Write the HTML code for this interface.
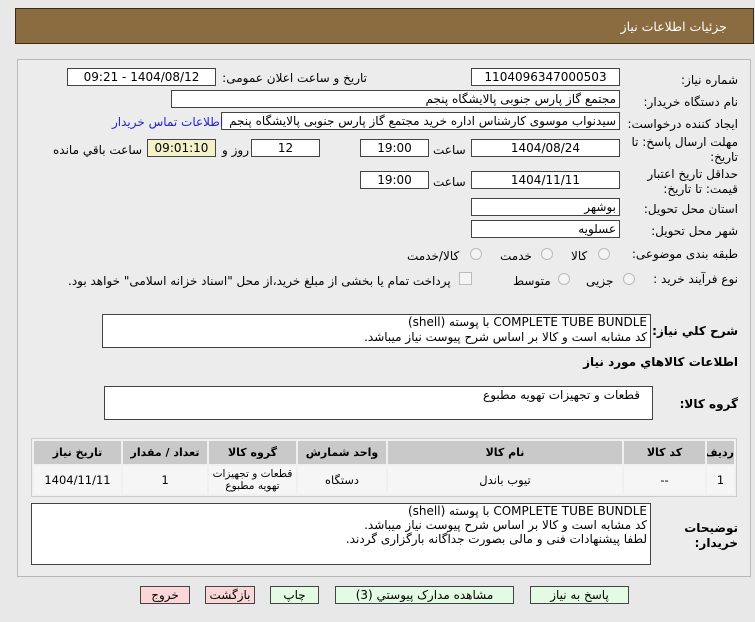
<!DOCTYPE html>
<html><head><meta charset="utf-8">
<style>
*{margin:0;padding:0;box-sizing:border-box}
body{width:755px;height:622px;background:#e8e8e8;font-family:"DejaVu Sans","Liberation Sans",sans-serif;font-size:11.5px;color:#000;position:relative;overflow:hidden;direction:rtl}
.a{position:absolute;white-space:nowrap}
.hdr{left:15px;top:8px;width:739px;height:36px;background:#8b6b40;border:1px solid #3a2b17}
.hdr span{position:absolute;right:26px;top:10px;color:#fff;font-size:12.5px}
.panel{left:17px;top:59px;width:734px;height:518px;border:1px solid #b8b8b8;background:#ececec}
.box{position:absolute;background:#fff;border:1px solid #444;height:18px;line-height:16px;padding:0 3px;white-space:nowrap;overflow:hidden;font-size:12px}
.c{text-align:center}
.lbl{position:absolute;white-space:nowrap;font-size:12px}
.rad{position:absolute;width:12px;height:12px;border-radius:50%;border:1px solid #bbb;background:#f4f4f4}
table{position:absolute;left:31px;top:438px;width:706px;table-layout:fixed;border-collapse:separate;border-spacing:2px;border:1px solid #ccc;background:#f0f0f0;font-size:11.5px}
th{background:#c9c9c9;height:23px;font-weight:bold;font-size:11px;white-space:nowrap;overflow:hidden}
td{background:#f6f6f6;height:28px;text-align:center;line-height:13px;white-space:nowrap}
.btn{position:absolute;top:586px;height:18px;border:1px solid #444;text-align:center;line-height:16px;font-size:12px}
.g{background:#e3fbe3}.p{background:#fbd6d6}
</style></head><body>
<div class="a hdr"><span>جزئیات اطلاعات نیاز</span></div>
<div class="a panel"></div>

<div class="lbl" style="right:17px;top:73px">شماره نیاز:</div>
<div class="box c" style="left:471px;top:68px;width:149px">1104096347000503</div>
<div class="lbl" style="right:388px;top:71px">تاریخ و ساعت اعلان عمومی:</div>
<div class="box c" style="left:67px;top:68px;width:149px">1404/08/12 - 09:21</div>

<div class="lbl" style="right:17px;top:95px">نام دستگاه خریدار:</div>
<div class="box" style="left:171px;top:90px;width:449px">مجتمع گاز پارس جنوبی  پالایشگاه پنجم</div>

<div class="lbl" style="right:17px;top:117px">ایجاد کننده درخواست:</div>
<div class="box" style="left:221px;top:112px;width:399px">سیدنواب موسوی کارشناس اداره خرید مجتمع گاز پارس جنوبی  پالایشگاه پنجم</div>
<div class="lbl" style="left:112px;top:115px;color:#2323d0">اطلاعات تماس خریدار</div>

<div class="lbl" style="right:17px;top:135px;line-height:15px;text-align:right">مهلت ارسال پاسخ: تا<br>تاریخ:</div>
<div class="box c" style="left:471px;top:139px;width:149px">1404/08/24</div>
<div class="lbl" style="left:433px;top:143px">ساعت</div>
<div class="box c" style="left:360px;top:139px;width:69px">19:00</div>
<div class="box c" style="left:251px;top:139px;width:69px">12</div>
<div class="lbl" style="left:222px;top:143px">روز و</div>
<div class="box c" style="left:147px;top:139px;width:69px;background:#f3f1c8">09:01:10</div>
<div class="lbl" style="left:53px;top:143px">ساعت باقي مانده</div>

<div class="lbl" style="right:17px;top:167px;line-height:15px;text-align:right">حداقل تاریخ اعتبار<br>قیمت: تا تاریخ:</div>
<div class="box c" style="left:471px;top:171px;width:149px">1404/11/11</div>
<div class="lbl" style="left:433px;top:175px">ساعت</div>
<div class="box c" style="left:360px;top:171px;width:69px">19:00</div>

<div class="lbl" style="right:17px;top:202px">استان محل تحویل:</div>
<div class="box" style="left:471px;top:198px;width:149px">بوشهر</div>
<div class="lbl" style="right:17px;top:224px">شهر محل تحویل:</div>
<div class="box" style="left:471px;top:220px;width:149px">عسلویه</div>

<div class="lbl" style="right:17px;top:247px">طبقه بندی موضوعی:</div>
<div class="rad" style="left:598px;top:248px"></div><div class="lbl" style="left:571px;top:249px">کالا</div>
<div class="rad" style="left:541px;top:248px"></div><div class="lbl" style="left:500px;top:249px">خدمت</div>
<div class="rad" style="left:470px;top:248px"></div><div class="lbl" style="left:407px;top:249px">کالا/خدمت</div>

<div class="lbl" style="right:17px;top:272px">نوع فرآیند خرید :</div>
<div class="rad" style="left:623px;top:273px"></div><div class="lbl" style="left:586px;top:274px">جزیی</div>
<div class="rad" style="left:558px;top:273px"></div><div class="lbl" style="left:513px;top:274px">متوسط</div>
<div class="a" style="left:459px;top:272px;width:13px;height:13px;border:1px solid #bbb;background:#f4f4f4"></div>
<div class="lbl" style="left:68px;top:274px">پرداخت تمام یا بخشی از مبلغ خرید،از محل "اسناد خزانه اسلامی" خواهد بود.</div>

<div class="lbl" style="right:17px;top:324px;font-weight:bold">شرح کلي نياز:</div>
<div class="box" style="left:102px;top:314px;width:549px;height:34px;line-height:15px;white-space:normal;text-align:right">COMPLETE TUBE BUNDLE با پوسته (shell)<br>کد مشابه است و کالا بر اساس شرح پیوست نیاز میباشد.</div>
<div class="lbl" style="right:17px;top:355px;font-weight:bold">اطلاعات كالاهاي مورد نياز</div>
<div class="lbl" style="right:17px;top:397px;font-weight:bold">گروه کالا:</div>
<div class="box" style="left:104px;top:386px;width:549px;height:34px;padding-right:12px">قطعات و تجهیزات تهویه مطبوع</div>

<table>
<colgroup><col style="width:27px"><col style="width:81px"><col style="width:234px"><col style="width:88px"><col style="width:87px"><col style="width:84px"><col></colgroup>
<tr><th>ردیف</th><th>کد کالا</th><th>نام کالا</th><th>واحد شمارش</th><th>گروه کالا</th><th>تعداد / مقدار</th><th>تاریخ نیاز</th></tr>
<tr><td>1</td><td>--</td><td>تیوب باندل</td><td>دستگاه</td><td style="font-size:10.5px;line-height:12px">قطعات و تجهیزات<br>تهویه مطبوع</td><td>1</td><td>1404/11/11</td></tr>
</table>

<div class="lbl" style="right:17px;top:521px;font-weight:bold;line-height:15px;text-align:right">توضیحات<br>خریدار:</div>
<div class="box" style="left:31px;top:503px;width:620px;height:62px;line-height:14px;white-space:normal;text-align:right">COMPLETE TUBE BUNDLE با پوسته (shell)<br>کد مشابه است و کالا بر اساس شرح پیوست نیاز میباشد.<br>لطفا پیشنهادات فنی و مالی بصورت جداگانه بارگزاری گردند.</div>

<div class="btn p" style="left:140px;width:50px">خروج</div>
<div class="btn p" style="left:205px;width:50px">بازگشت</div>
<div class="btn g" style="left:270px;width:49px">چاپ</div>
<div class="btn g" style="left:335px;width:179px">مشاهده مدارک پیوستي (3)</div>
<div class="btn g" style="left:530px;width:99px">پاسخ به نیاز</div>
</body></html>
